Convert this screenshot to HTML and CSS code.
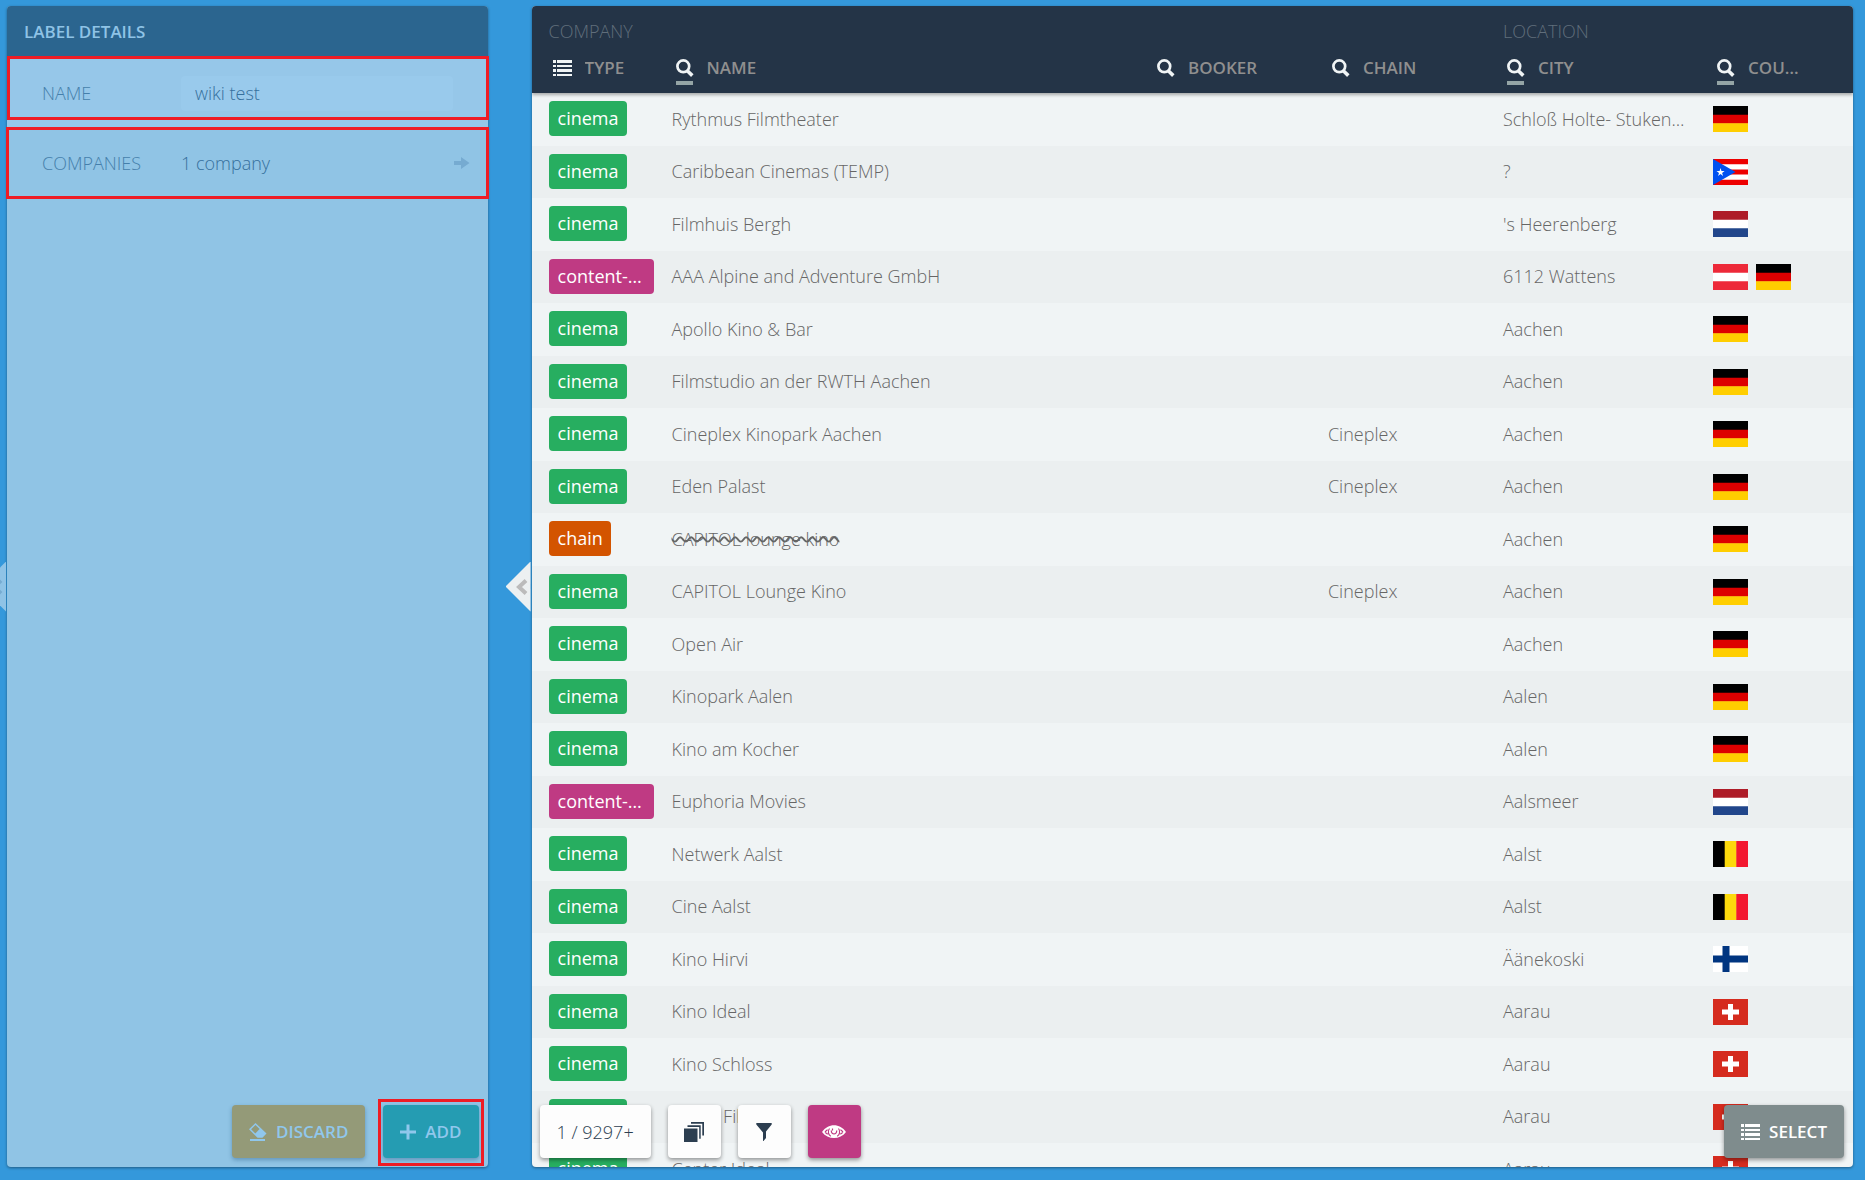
FILE: index.html
```html
<!DOCTYPE html>
<html lang="en">
<head>
<meta charset="utf-8">
<title>Label details</title>
<link rel="stylesheet" href="styles.css">
</head>
<body>
<svg class="sprite" aria-hidden="true">
  <symbol id="i-search" viewBox="0 0 18 18"><circle cx="7.3" cy="7.3" r="5.9" fill="none" stroke="currentColor" stroke-width="2.7"/><path d="M11.3 11.8l5 4.8" stroke="currentColor" stroke-width="3.6"/></symbol>
  <symbol id="i-list" viewBox="0 0 19 16"><path d="M0 0h3v3H0zM4 0h15v3H4zM0 5h3v2H0zM4 5h15v2H4zM0 9h3v3H0zM4 9h15v3H4zM0 14h3v2H0zM4 14h15v2H4z" fill="currentColor"/></symbol>
  <symbol id="i-arrow" viewBox="0 0 16 12"><path d="M0 4h7V0l8.500 6L7 12V8H0z" fill="currentColor"/></symbol>
  <symbol id="i-eraser" viewBox="0 0 18 18"><path d="M6.500 0L17.500 10.600 13.500 14.800H8.500L0 6.300z" fill="currentColor"/><path d="M6.500 1.900L10.600 6 6.300 10.400 2.100 6.200z" fill="#949a78"/><path d="M1 16h15v2H1z" fill="currentColor"/></symbol>
  <symbol id="i-plus" viewBox="0 0 16 16"><path d="M6.500 .5h3v6H16v3H9.500v6h-3v-6H0v-3h6.500z" fill="currentColor"/></symbol>
  <symbol id="i-stack" viewBox="0 0 20 20"><path d="M0 6.500h13.500V20H0zM3.500 3.200h13.200v13.500h-1.500V4.900H3.500zM7 0h13v13.500h-1.700V1.700H7z" fill="currentColor"/></symbol>
  <symbol id="i-filter" viewBox="0 0 16 18"><path d="M.3 0h15.400v1.500L10 8.500V15l-2.500 3H7V9.500L.3 1.500z" fill="currentColor"/></symbol>
  <symbol id="i-eye" viewBox="0 0 24 14"><path d="M0 7C6-2 18-2 24 7 18 15 6 15 0 7z" fill="currentColor"/><path d="M7.500 3.500C5.500 6 6.200 10 8.800 11.300M16.500 3.500c2 2.500 1.300 6.500-1.300 7.800M3 7c1-1 1.700-1.700 2.600-2.200M21 7c-1-1-1.700-1.700-2.600-2.200M3 7.200l2.700 2M21 7.200l-2.700 2" fill="none" stroke="#bf3a83" stroke-width="1.200"/><path d="M9.300 5.500c-.300 4.500 5.700 4.500 5.400 0M10.500 3.500v2" fill="none" stroke="#bf3a83" stroke-width="1.200"/></symbol>
  <symbol id="i-chevron" viewBox="0 0 12 16"><path d="M10 1.500L3 8l7 6.500" fill="none" stroke="currentColor" stroke-width="4"/></symbol>
  <symbol id="f-de" viewBox="0 0 35 26"><path d="M0 0h35v9H0z"/><path d="M0 8.700h35v9H0z" fill="#d00"/><path d="M0 17.300h35V26H0z" fill="#ffce00"/></symbol>
  <symbol id="f-pr" viewBox="0 0 35 26"><path d="M0 0h35v26H0z" fill="#ed0000"/><path d="M0 5.200h35v5.200H0zM0 15.600h35v5.200H0z" fill="#fff"/><path d="M0 0l22.500 13L0 26z" fill="#0050f0"/><path d="M7.500 9l1 3h3.100l-2.500 1.900 1 3-2.600-1.900-2.500 1.900 1-3L3.500 12h3.100z" fill="#fff"/></symbol>
  <symbol id="f-nl" viewBox="0 0 35 26"><path d="M0 0h35v26H0z" fill="#fff"/><path d="M0 0h35v8.700H0z" fill="#ae1c28"/><path d="M0 17.300h35V26H0z" fill="#21468b"/></symbol>
  <symbol id="f-at" viewBox="0 0 35 26"><path d="M0 0h35v26H0z" fill="#ed2939"/><path d="M0 8.700h35v8.600H0z" fill="#fff"/></symbol>
  <symbol id="f-be" viewBox="0 0 35 26"><path d="M0 0h12v26H0z"/><path d="M11.700 0h12v26h-12z" fill="#fdda0c"/><path d="M23.300 0H35v26H23.300z" fill="#f31830"/></symbol>
  <symbol id="f-fi" viewBox="0 0 35 26"><path d="M0 0h35v26H0z" fill="#fff"/><path d="M0 9.500h35v7H0zM9.500 0h7v26h-7z" fill="#003580"/></symbol>
  <symbol id="f-ch" viewBox="0 0 35 26"><path d="M0 0h35v26H0z" fill="#d52b1e"/><path d="M15 5h5v5.500h6v5h-6V21h-5v-5.500H9v-5h6z" fill="#fff"/></symbol>
</svg>
<div class="app">
  <section class="panel details">
    <button class="tab tab-left" aria-label="Collapse previous"><svg><use href="#i-chevron"/></svg></button>
    <h1 class="title">LABEL DETAILS</h1>
    <form class="form">
      <div class="fieldwrap">
        <div class="field">
          <label for="name">NAME</label>
          <input id="name" type="text" value="wiki test">
        </div>
      </div>
      <div class="field companies">
        <span class="caption">COMPANIES</span>
        <a class="link" href="#companies">1 company <svg><use href="#i-arrow"/></svg></a>
      </div>
    </form>
    <div class="actions">
      <button class="btn discard"><svg class="s18"><use href="#i-eraser"/></svg>DISCARD</button>
      <button class="btn add"><svg class="s16"><use href="#i-plus"/></svg>ADD</button>
    </div>
  </section>

  <section class="panel list">
    <button class="tab" aria-label="Collapse"><svg><use href="#i-chevron"/></svg></button>
    <div class="scroll">
      <table>
        <colgroup><col class="c-type"><col><col class="c-mid"><col class="c-mid"><col class="c-city"><col class="c-country"></colgroup>
        <thead>
          <tr class="groups"><th colspan="4">COMPANY</th><th colspan="2">LOCATION</th></tr>
          <tr class="heads">
            <th><div class="head"><svg class="list-icon"><use href="#i-list"/></svg><span>TYPE</span></div></th>
            <th><div class="head sorted"><svg><use href="#i-search"/></svg><span>NAME</span></div></th>
            <th><div class="head"><svg><use href="#i-search"/></svg><span>BOOKER</span></div></th>
            <th><div class="head"><svg><use href="#i-search"/></svg><span>CHAIN</span></div></th>
            <th><div class="head sorted"><svg><use href="#i-search"/></svg><span>CITY</span></div></th>
            <th><div class="head sorted last"><svg><use href="#i-search"/></svg><span>COUNTRY</span></div></th>
          </tr>
        </thead>
        <tbody>
          <tr><td><span class="badge">cinema</span></td><td>Rythmus Filmtheater</td><td></td><td></td><td>Schloß Holte- Stukenbrock</td><td><svg class="flag"><use href="#f-de"/></svg></td></tr>
          <tr><td><span class="badge">cinema</span></td><td>Caribbean Cinemas (TEMP)</td><td></td><td></td><td>?</td><td><svg class="flag"><use href="#f-pr"/></svg></td></tr>
          <tr><td><span class="badge">cinema</span></td><td>Filmhuis Bergh</td><td></td><td></td><td>'s Heerenberg</td><td><svg class="flag"><use href="#f-nl"/></svg></td></tr>
          <tr><td><span class="badge content">content-provider</span></td><td>AAA Alpine and Adventure GmbH</td><td></td><td></td><td>6112 Wattens</td><td><svg class="flag"><use href="#f-at"/></svg><svg class="flag"><use href="#f-de"/></svg></td></tr>
          <tr><td><span class="badge">cinema</span></td><td>Apollo Kino &amp; Bar</td><td></td><td></td><td>Aachen</td><td><svg class="flag"><use href="#f-de"/></svg></td></tr>
          <tr><td><span class="badge">cinema</span></td><td>Filmstudio an der RWTH Aachen</td><td></td><td></td><td>Aachen</td><td><svg class="flag"><use href="#f-de"/></svg></td></tr>
          <tr><td><span class="badge">cinema</span></td><td>Cineplex Kinopark Aachen</td><td></td><td>Cineplex</td><td>Aachen</td><td><svg class="flag"><use href="#f-de"/></svg></td></tr>
          <tr><td><span class="badge">cinema</span></td><td>Eden Palast</td><td></td><td>Cineplex</td><td>Aachen</td><td><svg class="flag"><use href="#f-de"/></svg></td></tr>
          <tr><td><span class="badge chain">chain</span></td><td><s>CAPITOL lounge kino</s></td><td></td><td></td><td>Aachen</td><td><svg class="flag"><use href="#f-de"/></svg></td></tr>
          <tr><td><span class="badge">cinema</span></td><td>CAPITOL Lounge Kino</td><td></td><td>Cineplex</td><td>Aachen</td><td><svg class="flag"><use href="#f-de"/></svg></td></tr>
          <tr><td><span class="badge">cinema</span></td><td>Open Air</td><td></td><td></td><td>Aachen</td><td><svg class="flag"><use href="#f-de"/></svg></td></tr>
          <tr><td><span class="badge">cinema</span></td><td>Kinopark Aalen</td><td></td><td></td><td>Aalen</td><td><svg class="flag"><use href="#f-de"/></svg></td></tr>
          <tr><td><span class="badge">cinema</span></td><td>Kino am Kocher</td><td></td><td></td><td>Aalen</td><td><svg class="flag"><use href="#f-de"/></svg></td></tr>
          <tr><td><span class="badge content">content-provider</span></td><td>Euphoria Movies</td><td></td><td></td><td>Aalsmeer</td><td><svg class="flag"><use href="#f-nl"/></svg></td></tr>
          <tr><td><span class="badge">cinema</span></td><td>Netwerk Aalst</td><td></td><td></td><td>Aalst</td><td><svg class="flag"><use href="#f-be"/></svg></td></tr>
          <tr><td><span class="badge">cinema</span></td><td>Cine Aalst</td><td></td><td></td><td>Aalst</td><td><svg class="flag"><use href="#f-be"/></svg></td></tr>
          <tr><td><span class="badge">cinema</span></td><td>Kino Hirvi</td><td></td><td></td><td>Äänekoski</td><td><svg class="flag"><use href="#f-fi"/></svg></td></tr>
          <tr><td><span class="badge">cinema</span></td><td>Kino Ideal</td><td></td><td></td><td>Aarau</td><td><svg class="flag"><use href="#f-ch"/></svg></td></tr>
          <tr><td><span class="badge">cinema</span></td><td>Kino Schloss</td><td></td><td></td><td>Aarau</td><td><svg class="flag"><use href="#f-ch"/></svg></td></tr>
          <tr><td><span class="badge">cinema</span></td><td>Freier Film</td><td></td><td></td><td>Aarau</td><td><svg class="flag"><use href="#f-ch"/></svg></td></tr>
          <tr><td><span class="badge">cinema</span></td><td>Center Ideal</td><td></td><td></td><td>Aarau</td><td><svg class="flag"><use href="#f-ch"/></svg></td></tr>
        </tbody>
      </table>
    </div>
    <div class="toolbar">
      <button class="btn white count">1 / 9297+</button>
      <button class="btn white square" aria-label="Copy"><svg class="s20"><use href="#i-stack"/></svg></button>
      <button class="btn white square" aria-label="Filter"><svg class="s18"><use href="#i-filter"/></svg></button>
      <button class="btn pink square" aria-label="Show"><svg class="eye"><use href="#i-eye"/></svg></button>
      <button class="btn select"><svg class="list-icon"><use href="#i-list"/></svg>SELECT</button>
    </div>
  </section>
</div>
</body>
</html>
```
FILE: styles.css
```css
* { box-sizing: border-box; }
body {
  margin: 0;
  background: #3498db;
  color: #666;
  font: 300 18px/24px "Open Sans", sans-serif;
}
.sprite { position: absolute; width: 0; height: 0; }
button, input { font: inherit; color: inherit; border: 0; }
button { cursor: pointer; }
.app {
  display: grid;
  grid-template-columns: 4fr 11fr;
  gap: 44px;
  height: 100vh;
  padding: 6px 12px 13px 7px;
  overflow: hidden;
}
.panel {
  position: relative;
  min-width: 0;
  min-height: 0;
  border-radius: 4px;
  box-shadow: 0 1px 3px rgba(0, 0, 0, .4);
}

/* label details */
.details {
  display: flex;
  flex-direction: column;
  background: #90c4e5;
  color: #36709d;
}
.title {
  margin: 0;
  padding: 14px 17px 12px;
  border-radius: 4px 4px 0 0;
  background: #2b658f;
  color: #8fc3e6;
  font-size: 17px;
  line-height: 24px;
  font-weight: 600;
}
.form { flex: 1; }
.fieldwrap { padding-bottom: 7px; background: #96c7e9; }
.field {
  display: flex;
  align-items: center;
  height: 64px;
  margin-right: -1px;
  padding: 10px 33px 0 32px;
  border: 3px solid #ee1c25;
}
.field label, .caption { width: 139px; color: #457fab; }
.field input {
  flex: 1;
  min-width: 0;
  height: 35px;
  padding: 0 14px;
  border-radius: 4px;
  background: #99caec;
}
.companies { height: 72px; margin-left: -1px; padding: 0 16px 0 33px; }
.link {
  display: flex;
  flex: 1;
  align-items: center;
  justify-content: space-between;
  color: inherit;
  text-decoration: none;
}
.link svg { width: 16px; height: 12px; color: #76abd1; }
.actions {
  display: flex;
  justify-content: flex-end;
  gap: 18px;
  padding: 9px;
}

/* buttons */
.btn {
  position: relative;
  display: flex;
  align-items: center;
  justify-content: center;
  gap: 9px;
  height: 53px;
  padding: 0 17px;
  border-radius: 4px;
  box-shadow: 0 2px 4px rgba(0, 0, 0, .4);
  font-size: 17px;
  font-weight: 600;
}
.discard { background: #949a78; color: #90c7ec; box-shadow: 0 2px 4px rgba(30, 80, 120, .4); }
.add { background: #259cb2; color: #90c7ec; box-shadow: 0 2px 4px rgba(30, 80, 120, .4); }
.add::after {
  content: "";
  position: absolute;
  inset: -6px -5px -8px;
  border: 3px solid #ee1c25;
}
.white { background: #fdfdfd; color: #2c3e50; }
.pink { background: #bf3a83; color: #fff; }
.square { width: 53px; padding: 0; }
.count { font-size: 18px; font-weight: 300; }
.select { margin-left: auto; background: #7f8c8d; color: #fff; }
.s16 { width: 16px; height: 16px; }
.s18 { width: 18px; height: 18px; }
.s20 { width: 20px; height: 20px; }
.eye { width: 24px; height: 14px; }
.list-icon { width: 19px; height: 16px; }

/* collapse handles */
.tab {
  position: absolute;
  top: 50%;
  left: -26px;
  width: 25px;
  height: 50px;
  margin-top: -25px;
  padding: 0 0 0 10px;
  display: flex;
  align-items: center;
  clip-path: polygon(100% 0, 100% 100%, 0 50%);
  background: #ecf0f1;
  color: #bbb;
}
.tab svg { width: 12px; height: 16px; }
.tab-left { background: #8fc3e6; color: #76abd1; }

/* company list */
.list { background: #f0f4f5; }
.scroll { height: 100%; overflow: hidden; border-radius: 4px; }
table { width: 100%; table-layout: fixed; border-collapse: collapse; }
.c-type { width: 123px; }
.c-mid { width: 175px; }
.c-city { width: 210px; }
.c-country { width: 157px; }
thead {
  position: relative;
  background: #243447;
  box-shadow: 0 2px 3px rgba(0, 0, 0, .3);
}
th, td { padding: 0 0 2px 17px; text-align: left; }
th { font-size: 17px; font-weight: 600; color: #8f8f8f; }
.groups th { height: 43px; padding-top: 9px; color: #606e7b; font-size: 18px; font-weight: 300; }
.heads th { height: 44px; padding-bottom: 7px; }
.head { position: relative; display: flex; align-items: center; gap: 13px; padding-left: 4px; }
.head svg { flex: none; color: #f0f4f5; }
.head svg:not(.list-icon) { width: 18px; height: 18px; }
.head span { overflow: hidden; text-overflow: ellipsis; }
.head.last { margin-right: 51px; }
.sorted::after {
  content: "";
  position: absolute;
  left: 4px;
  top: 25px;
  width: 17px;
  height: 4px;
  background: #95a5a6;
}
td { height: 52px; overflow: hidden; white-space: nowrap; text-overflow: ellipsis; }
td:nth-child(5) { padding-right: 9px; }
tbody tr:nth-child(odd) td { height: 53px; }
tbody tr:nth-child(even) { background: #ebeff0; }
td:first-child { overflow: visible; }
s { text-decoration: line-through wavy 2px; }
.badge {
  display: block;
  width: fit-content;
  max-width: 105px;
  padding: 5px 8px 6px 9px;
  overflow: hidden;
  text-overflow: ellipsis;
  border-radius: 4px;
  background: #27ae60;
  color: #fff;
  font-weight: 400;
}
.content { background: #bf3a83; }
.chain { background: #d35400; }
.flag { display: inline-block; width: 35px; height: 26px; margin-right: 8px; vertical-align: middle; }
.toolbar {
  position: absolute;
  inset: auto 9px 9px 8px;
  display: flex;
  gap: 17px;
}
```
